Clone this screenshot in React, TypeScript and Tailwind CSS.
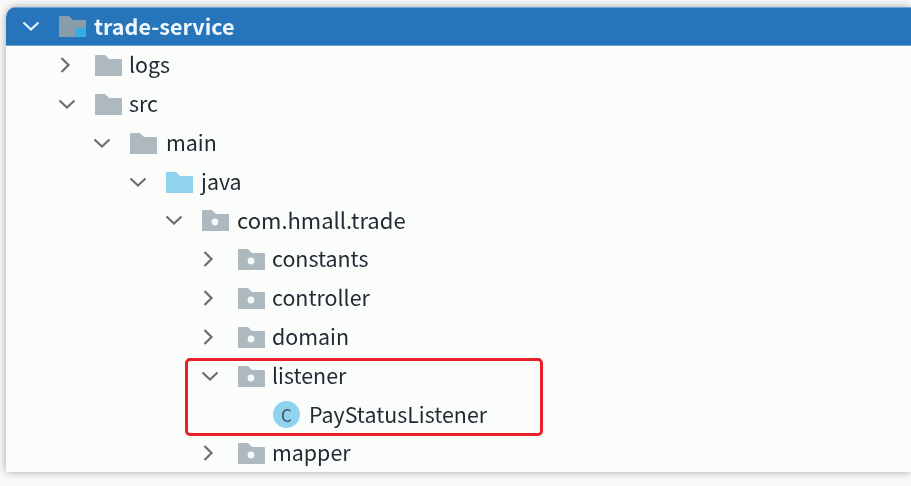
const FONT = "font-['Noto_Sans_CJK_SC','Noto_Sans',sans-serif]"

function Chevron({ open, white }: { open: boolean; white?: boolean }) {
  return (
    <span className="w-[18px] mr-[19px] shrink-0 flex justify-center">
      <svg width="18" height="18" viewBox="0 0 18 18" fill="none" stroke={white ? '#e8f1fa' : '#6e6e6e'} strokeWidth="2.2">
        {open ? <path d="M1.5 5.5 9 12.5l7.5-7" /> : <path d="M3.5 2l7 7-7 7" />}
      </svg>
    </span>
  )
}

function Folder({ kind }: { kind: 'plain' | 'java' | 'pkg' | 'module' }) {
  const fill = kind === 'java' ? '#8fd3ee' : kind === 'module' ? '#8a9bab' : '#aeb8bf'
  return (
    <svg width="27" height="22" viewBox="0 0 27 22" className="shrink-0 mr-[7px]">
      <path d="M0 2a1 1 0 0 1 1-1h9l4 4h12a1 1 0 0 1 1 1v16H0z" fill={fill} />
      {kind === 'pkg' && <circle cx="13" cy="13" r="3.4" fill="#f7f9f8" />}
      {kind === 'module' && <rect x="16" y="13" width="12" height="10" fill="#35aee2" />}
    </svg>
  )
}

type Row = {
  label: string
  indent: string
  open?: boolean
  kind: 'plain' | 'java' | 'pkg'
  labelClass?: string
}

function TreeRow({ label, indent, open, kind, labelClass = 'text-[21.4px]' }: Row) {
  return (
    <div className={`h-[38.8px] flex items-center ${indent}`}>
      <Chevron open={!!open} />
      <Folder kind={kind} />
      <span className={`${labelClass} text-[#1f2a33] leading-none pb-[2px]`}>{label}</span>
    </div>
  )
}

export default function App() {
  return (
    <div className={`w-[911px] h-[486px] overflow-hidden bg-[#fafafa] pt-[7px] pl-[6px] ${FONT}`}>
      <div className="h-[465px] bg-[#fbfdfb] rounded-tl-[10px] shadow-[0_0_9px_rgba(0,0,0,0.35)] overflow-hidden blur-[0.4px]">
        <div className="h-[38.8px] flex items-center pl-[16px] bg-[#2675bb] border-y border-[#6fa3d3]">
          <Chevron open white />
          <Folder kind="module" />
          <span className="ml-[1px] pb-[2px] text-[21.6px] font-bold text-[#eef5fb] leading-none">trade-service</span>
        </div>
        <TreeRow label="logs" indent="pl-[52px]" kind="plain" />
        <TreeRow label="src" indent="pl-[52px]" kind="plain" open />
        <TreeRow label="main" indent="pl-[87px]" kind="plain" open labelClass="text-[21.4px] ml-[2px]" />
        <TreeRow label="java" indent="pl-[123px]" kind="java" open labelClass="text-[21.4px] ml-[1px]" />
        <TreeRow label="com.hmall.trade" indent="pl-[159px]" kind="pkg" open labelClass="text-[22px] ml-[1px]" />
        <TreeRow label="constants" indent="pl-[195px]" kind="pkg" />
        <TreeRow label="controller" indent="pl-[195px]" kind="pkg" />
        <TreeRow label="domain" indent="pl-[195px]" kind="pkg" />
        <div className="relative">
          <TreeRow label="listener" indent="pl-[195px]" kind="pkg" open />
          <div className="h-[38.8px] flex items-center pl-[267px]">
            <span className="w-[27px] h-[27px] rounded-full bg-[#8fd3ee] flex items-center justify-center mr-[9px] shrink-0">
              <span className="text-[17px] text-[#3f5160] leading-none">C</span>
            </span>
            <span className="text-[21.4px] text-[#1f2a33] leading-none pb-[2px]">PayStatusListener</span>
          </div>
          <div className="absolute left-[179px] top-[2px] w-[358px] h-[78px] border-[3px] border-[#e8202a] rounded-[5px]" />
        </div>
        <TreeRow label="mapper" indent="pl-[195px]" kind="pkg" />
      </div>
    </div>
  )
}
